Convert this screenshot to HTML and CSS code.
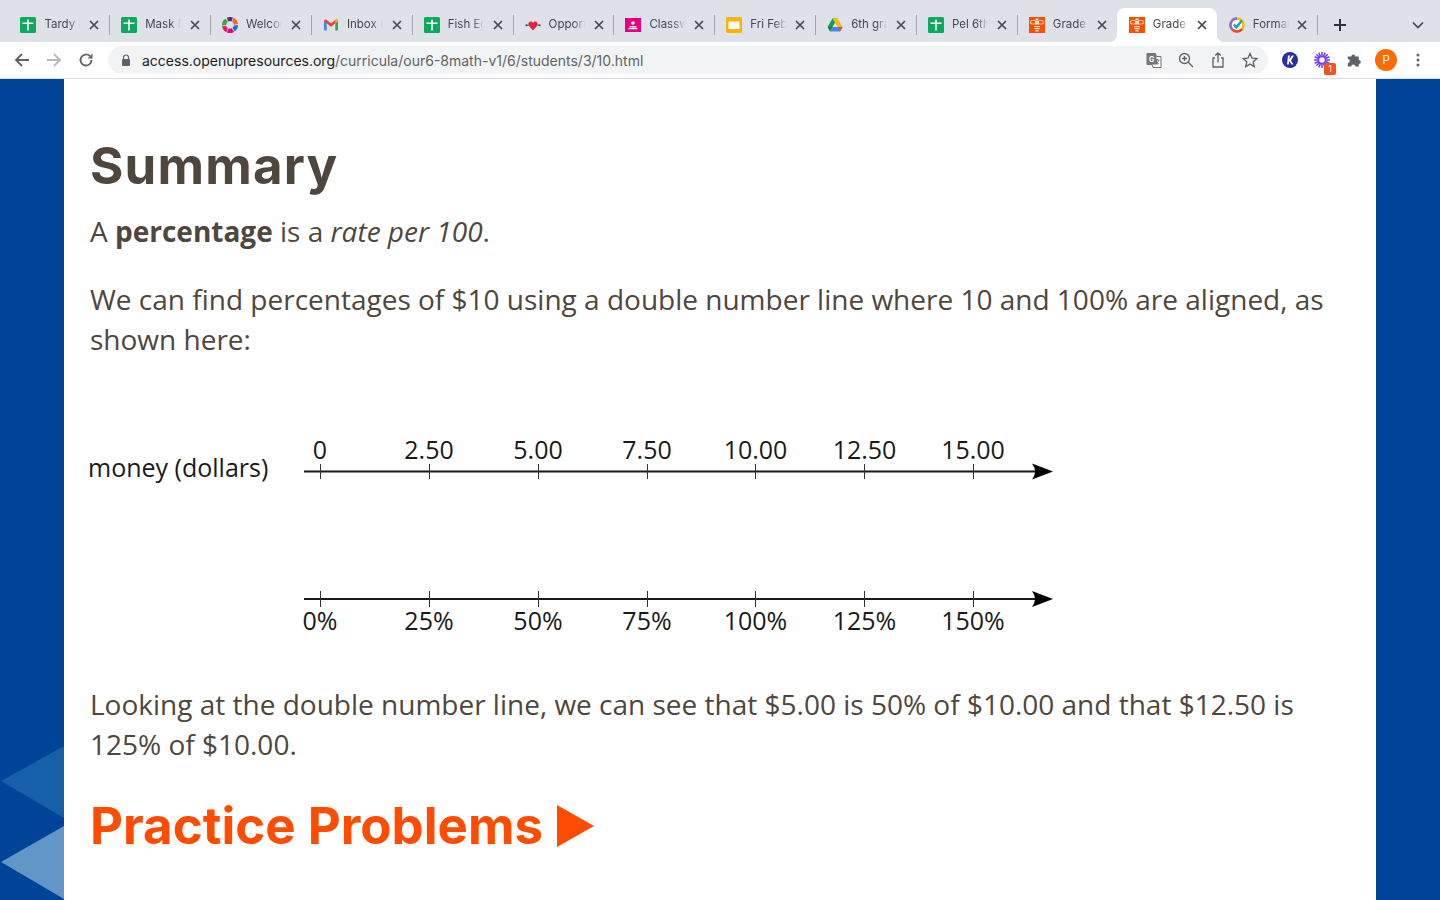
FILE: index.html
```html
<!DOCTYPE html>
<html lang="en">
<head>
  <meta charset="UTF-8">
  <title>Summary</title>
  <link rel="stylesheet" href="styles.css">
</head>
<body>

  <svg class="defs" width="0" height="0">
    <symbol id="sheets" viewBox="0 0 16 16">
      <rect width="16" height="16" rx="1.5" fill="#0da95f"/>
      <path d="M7.2 2.5h1.6v3h4.7v1.6H8.8v6.4H7.2V7.1H2.5V5.5h4.7z" fill="#fff"/>
    </symbol>
    <symbol id="grade" viewBox="0 0 16 16">
      <rect width="16" height="16" fill="#fa4f00"/>
      <rect x="1.5" y="3.5" width="5.5" height="3.5" rx="1.7" fill="none" stroke="#ffc48f" stroke-width="1.2"/>
      <rect x="9" y="3.5" width="5.5" height="3.5" rx="1.7" fill="none" stroke="#ffc48f" stroke-width="1.2"/>
      <path d="M6.5 1.5h3v2h-3z" fill="#ffe3cc"/>
      <path d="M6 4h4v3.5H6zM5 9h6v1.3H5zM5.5 11h5v1.3h-5zM6.5 13h3v1.5h-3z" fill="#ffe3cc"/>
    </symbol>
    <symbol id="close" viewBox="0 0 10 10">
      <path d="M1 1l8 8M9 1l-8 8" stroke="#45474b" stroke-width="1.7" fill="none"/>
    </symbol>
  </svg>

  <header class="browser">
    <div class="tab-bar">
      <div class="tab">
        <svg class="favicon"><use href="#sheets"/></svg>
        <span class="tab-title">Tardy D</span>
        <svg class="tab-close"><use href="#close"/></svg>
      </div>
      <div class="tab">
        <svg class="favicon"><use href="#sheets"/></svg>
        <span class="tab-title">Mask F</span>
        <svg class="tab-close"><use href="#close"/></svg>
      </div>
      <div class="tab">
        <svg class="favicon" viewBox="0 0 16 16">
          <path d="M5 .6A8 8 0 0 1 11 .6L9.5 4.5a3.6 3.6 0 0 0-3.5 0z" fill="#5b2a86"/>
          <path d="M11.5 .8A8 8 0 0 1 16 7l-4.2.7a3.8 3.8 0 0 0-1.6-3z" fill="#f26a21"/>
          <path d="M16 8a8 8 0 0 1-3.2 6.4L10.5 11a3.8 3.8 0 0 0 1.3-2.5z" fill="#1c75bc"/>
          <path d="M12 15A8 8 0 0 1 5 15.4L6.5 11.5a3.8 3.8 0 0 0 3.2-.2z" fill="#e6007e"/>
          <path d="M4.5 15.2A8 8 0 0 1 0 9.5l4.2-.8a3.8 3.8 0 0 0 1.6 2.6z" fill="#ec1c5b"/>
          <path d="M0 8.5A8 8 0 0 1 3.5 1.4L5.7 5a3.8 3.8 0 0 0-1.5 3z" fill="#39a935"/>
        </svg>
        <span class="tab-title">Welcome</span>
        <svg class="tab-close"><use href="#close"/></svg>
      </div>
      <div class="tab">
        <svg class="favicon" viewBox="0 0 16 16">
          <path d="M1 13.5V4l2.7 1.8v7.7z" fill="#4285f4"/>
          <path d="M15 13.5V4l-2.7 1.8v7.7z" fill="#34a853"/>
          <path d="M1 4.2C1 2.7 2.6 2 3.7 2.9L8 6.3l4.3-3.4C13.4 2 15 2.7 15 4.2L8 9.7z" fill="#ea4335"/>
          <path d="M12.3 2.9C13.4 2 15 2.7 15 4.2l-2.7 2z" fill="#fbbc04"/>
        </svg>
        <span class="tab-title">Inbox (</span>
        <svg class="tab-close"><use href="#close"/></svg>
      </div>
      <div class="tab">
        <svg class="favicon"><use href="#sheets"/></svg>
        <span class="tab-title">Fish Eg</span>
        <svg class="tab-close"><use href="#close"/></svg>
      </div>
      <div class="tab">
        <svg class="favicon" viewBox="0 0 16 16">
          <path d="M8 13.5L4 8.9C2.6 7 3.8 4.5 5.8 4.5 6.9 4.5 7.6 5.2 8 5.9 8.4 5.2 9.1 4.5 10.2 4.5c2 0 3.2 2.500 1.800 4.400z" fill="#e8213f"/>
          <path d="M0 8.2l1.6-1.300v2.600zM16 8.2l-1.6-1.300v2.600z" fill="#333"/>
          <path d="M1 8.2h2.500M12.500 8.200H15" stroke="#333"/>
        </svg>
        <span class="tab-title">Opport</span>
        <svg class="tab-close"><use href="#close"/></svg>
      </div>
      <div class="tab">
        <svg class="favicon" viewBox="0 0 16 16">
          <rect width="16" height="14" y="1" fill="#e6007e"/>
          <circle cx="8" cy="6" r="1.8" fill="#fff"/>
          <path d="M4.5 9h7v1.500h-7zM3.500 11h9v1.200h-9z" fill="#fff"/>
        </svg>
        <span class="tab-title">Classw</span>
        <svg class="tab-close"><use href="#close"/></svg>
      </div>
      <div class="tab">
        <svg class="favicon" viewBox="0 0 16 16">
          <rect width="16" height="16" rx="1.5" fill="#fbb400"/>
          <rect x="2.5" y="4.5" width="11" height="7.5" fill="#fff"/>
        </svg>
        <span class="tab-title">Fri Feb</span>
        <svg class="tab-close"><use href="#close"/></svg>
      </div>
      <div class="tab">
        <svg class="favicon" viewBox="0 0 16 16">
          <path d="M5.5 1.5h5L5.5 10H.5z" fill="#0f9d58"/>
          <path d="M10.5 1.5L15.5 10h-5L5.5 1.500z" fill="#fbbc04"/>
          <path d="M3 14.500L5.500 10h10L13 14.500z" fill="#4285f4"/>
          <path d="M3 14.500L.5 10h5z" fill="#0b8043"/>
          <path d="M13 14.500L15.500 10h-4z" fill="#ea4335"/>
        </svg>
        <span class="tab-title">6th gra</span>
        <svg class="tab-close"><use href="#close"/></svg>
      </div>
      <div class="tab">
        <svg class="favicon"><use href="#sheets"/></svg>
        <span class="tab-title">Pel 6th</span>
        <svg class="tab-close"><use href="#close"/></svg>
      </div>
      <div class="tab narrow before-active">
        <svg class="favicon"><use href="#grade"/></svg>
        <span class="tab-title">Grade</span>
        <svg class="tab-close"><use href="#close"/></svg>
      </div>
      <div class="tab narrow active">
        <svg class="favicon"><use href="#grade"/></svg>
        <span class="tab-title">Grade</span>
        <svg class="tab-close"><use href="#close"/></svg>
      </div>
      <div class="tab narrow">
        <svg class="favicon" viewBox="0 0 16 16">
          <circle cx="8" cy="8" r="6.5" fill="#fff" stroke="#fbbc04" stroke-width="2.5"/>
          <path d="M8 1.5A6.5 6.5 0 0 0 3.4 12.6" fill="none" stroke="#8a6fd1" stroke-width="2.5"/>
          <path d="M3.4 12.6A6.5 6.5 0 0 0 13 12" fill="none" stroke="#ea4335" stroke-width="2.5"/>
          <path d="M4.8 7.5l2.5 2.8L13 3.5" fill="none" stroke="#12a5b5" stroke-width="2.4"/>
        </svg>
        <span class="tab-title">Formati</span>
        <svg class="tab-close"><use href="#close"/></svg>
      </div>
      <svg class="new-tab" viewBox="0 0 14 14"><path d="M7 1v12M1 7h12" stroke="#303236" stroke-width="2" fill="none"/></svg>
      <svg class="tab-menu" viewBox="0 0 12 8"><path d="M1 1.5l5 5 5-5" stroke="#45474b" stroke-width="1.7" fill="none"/></svg>
    </div>

    <div class="toolbar">
      <div class="tool">
        <svg viewBox="0 0 16 16"><path d="M15 8H2M8 2L2 8l6 6" class="ink"/></svg>
      </div>
      <div class="tool">
        <svg viewBox="0 0 16 16"><path d="M1 8h13M8 2l6 6-6 6" class="ink faint"/></svg>
      </div>
      <div class="tool">
        <svg viewBox="0 0 16 16"><path d="M13.5 8a5.5 5.5 0 1 1-1.6-3.9" class="ink"/><path d="M14.5 1.5v5h-5z" fill="#5f6368"/></svg>
      </div>
      <div class="omnibox">
        <svg class="lock" viewBox="0 0 10 12"><path d="M2.5 5V3.5a2.5 2.5 0 0 1 5 0V5" fill="none" stroke="#5f6368" stroke-width="1.2"/><rect x="1" y="5" width="8" height="7" rx="1" fill="#5f6368"/></svg>
        <span class="url"><span class="host">access.openupresources.org</span>/curricula/our6-8math-v1/6/students/3/10.html</span>
        <div class="tool">
          <svg viewBox="0 0 16 16"><path d="M1 1.5h8.5l1 3H15v11H7l-1-3H1z" fill="#fff" stroke="#6d7074"/><path d="M1 1.5h8.5l2.5 11H1z" fill="#75787c"/><text x="3" y="9.5" class="translate-g">G</text><path d="M9.5 8h4M11.5 7v1M12.8 8c-.4 2-1.5 3.2-3 4M10 9c.5 1.3 1.5 2.2 3 3" stroke="#6d7074" stroke-width=".8" fill="none"/></svg>
        </div>
        <div class="tool">
          <svg viewBox="0 0 16 16"><circle cx="6.5" cy="6.5" r="5" class="ink thin"/><path d="M10.3 10.3L15 15M4 6.5h5M6.5 4v5" class="ink thin"/></svg>
        </div>
        <div class="tool">
          <svg viewBox="0 0 16 16"><path d="M5 6H3v9h10V6h-2M8 10.5V1M5.3 3.5L8 1l2.700 2.500" class="ink thin"/></svg>
        </div>
        <div class="tool">
          <svg viewBox="0 0 16 16"><path d="M8 1.6l2 4.5 4.9.5-3.7 3.2 1.100 4.800L8 12.100l-4.300 2.500 1.100-4.800L1.100 6.600 6 6.100z" class="ink thin"/></svg>
        </div>
      </div>
      <div class="tool">
        <svg viewBox="0 0 16 16"><circle cx="8" cy="8" r="8" fill="#2a2d9c"/><path d="M6 3.5L5 12.5h1.800L7.200 9l2.300 3.500h2L9 8.500l3-5H9.800L7.500 7.500l.4-4z" fill="#fff"/></svg>
      </div>
      <div class="tool">
        <svg viewBox="0 0 16 16"><path d="M8 0v16M0 8h16M2.300 2.300l11.400 11.400M13.700 2.300L2.300 13.700M4.800 .6l6.400 14.800M11.200 .6L4.800 15.400M.6 4.800l14.800 6.400M15.400 4.800L.6 11.200" stroke="#6a3cff" stroke-width="1.5" fill="none"/><circle cx="8" cy="8" r="2.8" fill="#fff"/></svg>
        <span class="badge">1</span>
      </div>
      <div class="tool">
        <svg viewBox="0 0 16 16"><path d="M1 5h3.500a2 2 0 1 1 4 0H12v3.500a2 2 0 1 1 0 4V15H8.500a2 2 0 1 0-4 0H1v-3.500a2 2 0 1 0 0-4z" fill="#5f6368" transform="translate(.8 -.5)"/></svg>
      </div>
      <div class="tool">
        <span class="avatar">P</span>
      </div>
      <div class="tool">
        <svg viewBox="0 0 16 16"><circle cx="8" cy="3" r="1.5" fill="#5f6368"/><circle cx="8" cy="8" r="1.5" fill="#5f6368"/><circle cx="8" cy="13" r="1.5" fill="#5f6368"/></svg>
      </div>
    </div>
  </header>

  <div class="page">
    <svg class="chevrons" viewBox="0 0 64 160">
      <polygon points="1,35 64,0 64,72" fill="#1560a8"/>
      <polygon points="1,116 64,80 64,153" fill="#6295c8"/>
    </svg>

    <main class="lesson">
      <h2 class="summary-title">Summary</h2>
      <p class="first">A <strong>percentage</strong> is a <em>rate per 100</em>.</p>
      <p>We can find percentages of $10 using a double number line where 10 and 100% are aligned, as shown here:</p>

      <svg class="number-lines" viewBox="80 400 1000 260" width="1000" height="260">
        <text x="88" y="477" class="axis-name">money (dollars)</text>

        <g class="labels">
          <text x="320" y="459">0</text>
          <text x="429" y="459">2.50</text>
          <text x="538" y="459">5.00</text>
          <text x="647" y="459">7.50</text>
          <text x="755.5" y="459">10.00</text>
          <text x="864.5" y="459">12.50</text>
          <text x="973" y="459">15.00</text>
          <text x="320" y="630">0%</text>
          <text x="429" y="630">25%</text>
          <text x="538" y="630">50%</text>
          <text x="647" y="630">75%</text>
          <text x="755.5" y="630">100%</text>
          <text x="864.5" y="630">125%</text>
          <text x="973" y="630">150%</text>
        </g>

        <path class="axis" d="M304 471.500H1040M304 599H1040"/>
        <path class="ticks" d="M320.500 464v15M429.500 464v15M538.500 464v15M647.500 464v15M755.500 464v15M864.500 464v15M973.500 464v15
                               M320.500 591v16M429.500 591v16M538.500 591v16M647.500 591v16M755.500 591v16M864.500 591v16M973.500 591v16"/>
        <path class="arrow" d="M1053 471.500L1032 463.500Q1038 471.500 1032 479.500Z"/>
        <path class="arrow" d="M1053 599L1032 591Q1038 599 1032 607Z"/>
      </svg>

      <p>Looking at the double number line, we can see that $5.00 is 50% of $10.00 and that $12.50 is 125% of $10.00.</p>

      <h2 class="practice-title">Practice Problems <span class="play"></span></h2>
    </main>
  </div>

</body>
</html>
```

FILE: styles.css
```css
html, body {
  margin: 0;
  height: 100%;
  overflow: hidden;
}

body {
  display: flex;
  flex-direction: column;
  height: 900px;
  background: #004499;
  font-family: "Open Sans", sans-serif;
}

.defs {
  position: absolute;
}

/* browser chrome */
.browser {
  flex: none;
  font-family: Inter, "Liberation Sans", sans-serif;
}

.tab-bar {
  display: flex;
  align-items: flex-end;
  height: 42px;
  padding-left: 8.4px;
  background: #dee1e7;
}

.tab {
  position: relative;
  display: flex;
  align-items: center;
  flex: none;
  box-sizing: border-box;
  width: 100.85px;
  height: 34px;
  padding: 0 0 0 12px;
  border-radius: 8px 8px 0 0;
  color: #45474b;
  font-size: 11.5px;
}

.tab.narrow {
  width: 100px;
}

.tab::after {
  content: "";
  position: absolute;
  right: -1px;
  top: 7px;
  width: 1px;
  height: 20px;
  background: #a2a5a9;
}

.tab.active {
  background: #fff;
}

.tab.active::after,
.tab.before-active::after {
  display: none;
}

.tab.active::before {
  content: "";
  position: absolute;
  left: -8px;
  right: -8px;
  bottom: 0;
  height: 8px;
  background:
    radial-gradient(circle at 0 0, #dee1e7 8px, #fff 8.5px) left / 8px 8px no-repeat,
    radial-gradient(circle at 100% 0, #dee1e7 8px, #fff 8.5px) right / 8px 8px no-repeat;
}

.favicon {
  flex: none;
  width: 16px;
  height: 16px;
  margin-right: 8px;
}

.tab-title {
  flex: none;
  width: 38px;
  margin-bottom: 2px;
  overflow: hidden;
  white-space: nowrap;
  -webkit-mask-image: linear-gradient(to right, #000 65%, transparent 95%);
  mask-image: linear-gradient(to right, #000 65%, transparent 95%);
}

.tab-close {
  flex: none;
  width: 10px;
  height: 10px;
  margin-left: 7px;
}

.tab.narrow .tab-close {
  margin-left: 6px;
}

.new-tab {
  flex: none;
  align-self: center;
  width: 14px;
  height: 14px;
  margin: 8px 0 0 16px;
}

.tab-menu {
  flex: none;
  align-self: center;
  width: 12px;
  height: 8px;
  margin: 8px 16px 0 auto;
}

.toolbar {
  display: flex;
  align-items: center;
  box-sizing: border-box;
  height: 37px;
  padding: 4px 6px;
  background: #fff;
  border-bottom: 1px solid #dadce0;
}

.tool {
  position: relative;
  display: flex;
  align-items: center;
  justify-content: center;
  flex: none;
  width: 32px;
  height: 28px;
}

.tool svg {
  width: 16px;
  height: 16px;
}

.ink {
  fill: none;
  stroke: #5f6368;
  stroke-width: 1.8;
}

.ink.faint {
  stroke: #b4b7bb;
}

.ink.thin {
  stroke-width: 1.3;
}

.translate-g {
  font-size: 7px;
  font-weight: 700;
  fill: #fff;
}

.omnibox {
  display: flex;
  align-items: center;
  flex: 1;
  height: 28px;
  margin: 0 6px;
  padding: 0 2px 0 13px;
  border-radius: 14px;
  background: #f1f3f4;
}

.omnibox .tool:nth-of-type(1) {
  margin-left: auto;
}

.lock {
  flex: none;
  width: 10px;
  height: 12px;
  margin-right: 11px;
}

.url {
  color: #5f6368;
  font-size: 14px;
  white-space: nowrap;
}

.host {
  color: #202124;
}

.badge {
  position: absolute;
  right: 2px;
  bottom: -1px;
  width: 12px;
  height: 12px;
  border-radius: 2px;
  background: #f4511e;
  color: #fff;
  font-size: 9px;
  line-height: 12px;
  text-align: center;
}

.avatar {
  width: 22px;
  height: 22px;
  border-radius: 50%;
  background: #ff6a00;
  color: #fff;
  font-size: 12px;
  line-height: 22px;
  text-align: center;
}

/* page */
.page {
  position: relative;
  flex: 1;
  overflow: hidden;
}

.chevrons {
  position: absolute;
  left: 0;
  top: 667px;
  width: 64px;
  height: 160px;
}

.lesson {
  box-sizing: border-box;
  height: 100%;
  margin: 0 64px;
  padding: 51px 26px 0;
  background: #fff;
  color: #4f463d;
}

.lesson p {
  margin: 0 0 29px;
  font-size: 28px;
  line-height: 40px;
}

.lesson p.first {
  margin-bottom: 28px;
}

.summary-title {
  margin: 0 0 9px;
  font-family: Inter, sans-serif;
  font-size: 51px;
  font-weight: 700;
  letter-spacing: 1.2px;
  line-height: 72px;
}

.number-lines {
  display: block;
  margin: 41px 0 24px -10px;
}

.number-lines text {
  fill: #1a1a1a;
  font-family: "Open Sans", sans-serif;
  font-size: 25px;
}

.labels text {
  text-anchor: middle;
}

.axis {
  fill: none;
  stroke: #1a1a1a;
  stroke-width: 2;
}

.ticks {
  fill: none;
  stroke: #333;
  stroke-width: 1;
}

.arrow {
  fill: #000;
}

.practice-title {
  display: flex;
  align-items: center;
  margin: 32px 0 0;
  color: #ff4c00;
  font-family: Inter, sans-serif;
  font-size: 51px;
  font-weight: 700;
  line-height: 60px;
  white-space: pre;
}

.play {
  width: 0;
  height: 0;
  margin-left: 2px;
  border-left: 37px solid #ff4c00;
  border-top: 21px solid transparent;
  border-bottom: 21px solid transparent;
}
```
